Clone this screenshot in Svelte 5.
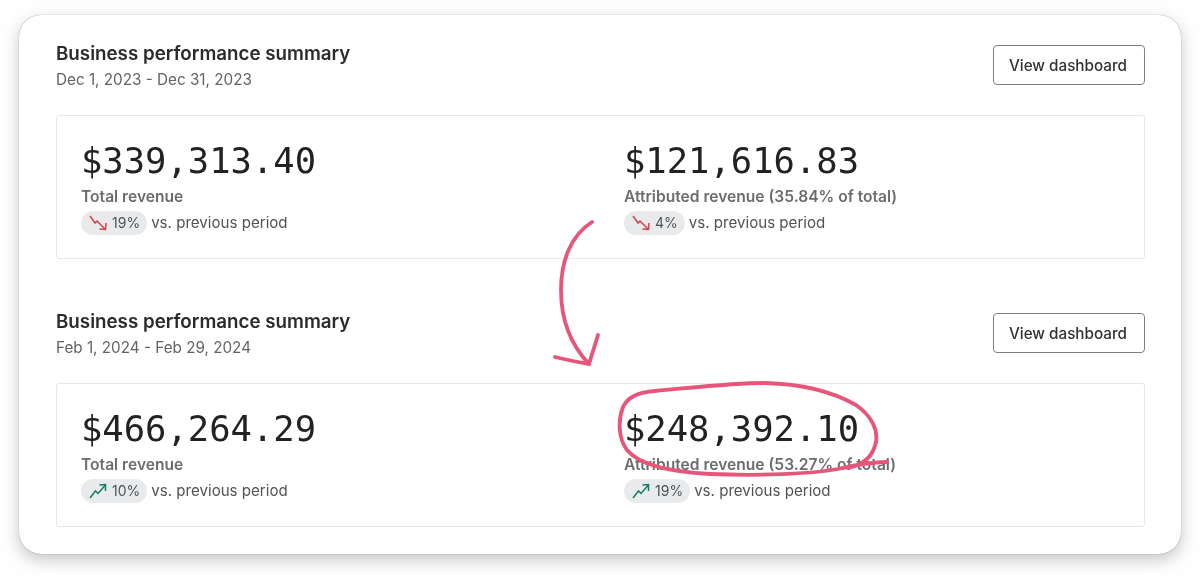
<script>
  const sections = [
    {
      range: 'Dec 1, 2023 - Dec 31, 2023',
      metrics: [
        { amount: '$339,313.40', label: 'Total revenue', pct: '19%', up: false },
        { amount: '$121,616.83', label: 'Attributed revenue (35.84% of total)', pct: '4%', up: false }
      ]
    },
    {
      range: 'Feb 1, 2024 - Feb 29, 2024',
      metrics: [
        { amount: '$466,264.29', label: 'Total revenue', pct: '10%', up: true },
        { amount: '$248,392.10', label: 'Attributed revenue (53.27% of total)', pct: '19%', up: true }
      ]
    }
  ];
</script>

<div class="page">
  <main class="card">
    {#each sections as s}
      <section class="section">
        <header class="head">
          <div>
            <h2>Business performance summary</h2>
            <p class="range">{s.range}</p>
          </div>
          <button type="button">View dashboard</button>
        </header>
        <div class="box">
          {#each s.metrics as m}
            <div class="metric">
              <div class="amount">{m.amount}</div>
              <div class="label">{m.label}</div>
              <div class="trend">
                <span class="badge">
                  {#if m.up}
                    <svg class="up" viewBox="0 0 18 16" width="18" height="16" aria-hidden="true">
                      <path d="M1 15 L6.5 8 L9 10.5 L16 2.5 M10.5 2 L16.5 1.5 L16.5 8" />
                    </svg>
                  {:else}
                    <svg class="down" viewBox="0 0 18 16" width="18" height="16" aria-hidden="true">
                      <path d="M1 1 L6 8 L8 6 L16 14 M17 8 L16.5 14.5 L10.5 14" />
                    </svg>
                  {/if}
                  {m.pct}
                </span>
                <span class="vs">vs. previous period</span>
              </div>
            </div>
          {/each}
        </div>
      </section>
    {/each}
  </main>

  <svg class="ink" viewBox="0 0 1200 577" width="1200" height="577" aria-hidden="true">
    <path d="M592 222 C570 236 561 262 561 290 C561 322 572 346 589 364" />
    <path d="M555 357 C566 360 578 362 589 364 C592 354 595 345 598 335" />
    <path d="M887 462 C870 462 855 465 838 469 C810 474 760 476 710 474 C672 472 640 466 627 450 C618 438 618 420 623 407 C628 396 640 392 655 391 C690 388 730 383 765 383 C805 384 835 393 856 405 C872 416 878 430 876 442 C873 456 865 464 848 468" />
  </svg>
</div>

<style>
  :global(body) {
    margin: 0;
    background: #fefefe;
  }
  .page {
    position: relative;
    width: 1200px;
    height: 577px;
    padding: 15px 19px 0;
    box-sizing: border-box;
    overflow: hidden;
    font-family: Inter, "Liberation Sans", sans-serif;
    color: #202223;
    filter: blur(0.3px);
  }
  .card {
    height: 539px;
    box-sizing: border-box;
    padding: 30px 36px 0 37px;
    background: #fff;
    border-radius: 22px;
    box-shadow: 0 0 1px rgba(0, 0, 0, 0.5), 0 6px 16px rgba(0, 0, 0, 0.22);
    display: flex;
    flex-direction: column;
    gap: 54px;
  }
  .head {
    display: flex;
    justify-content: space-between;
    align-items: flex-start;
    height: 40px;
    margin-bottom: 30px;
  }
  h2 {
    margin: -3px 0 0;
    font-size: 18.75px;
    line-height: 24px;
    font-weight: 600;
    color: #2a2b2c;
  }
  .range {
    margin: 4px 0 0;
    font-size: 15.25px;
    line-height: 20px;
    color: #616364;
  }
  button {
    width: 152px;
    height: 40px;
    box-sizing: border-box;
    background: #fff;
    border: 1px solid #7d7f81;
    border-radius: 4px;
    font: 500 15.25px Inter, "Liberation Sans", sans-serif;
    color: #303132;
    padding: 0 2px 0 0;
  }
  .box {
    height: 144px;
    box-sizing: border-box;
    border: 1px solid #e6e7e8;
    border-radius: 3px;
    padding: 24px;
    display: grid;
    grid-template-columns: 1fr 1fr;
    gap: 47px;
  }
  .amount {
    font-family: "DejaVu Sans Mono", monospace;
    font-size: 35.5px;
    line-height: 42px;
    color: #202223;
  }
  .label {
    margin-top: 5px;
    font-size: 15.6px;
    line-height: 20px;
    font-weight: 600;
    color: #6a6c6e;
  }
  .trend {
    display: flex;
    align-items: center;
    gap: 4px;
    margin-top: 4px;
    font-size: 15.1px;
    line-height: 22px;
    color: #505254;
  }
  .badge {
    display: inline-flex;
    align-items: center;
    gap: 5px;
    height: 24px;
    padding: 0 7px 0 8px;
    border-radius: 12px;
    background: #e8eaeb;
    font-size: 14px;
  }
  .badge svg {
    fill: none;
    stroke-width: 1.5;
  }
  .down { stroke: #d8424e; }
  .up { stroke: #128060; }
  .ink {
    position: absolute;
    left: 0;
    top: 0;
    fill: none;
    stroke: #e8557a;
    stroke-width: 3.8;
    stroke-linecap: round;
    stroke-linejoin: round;
    pointer-events: none;
  }
</style>
